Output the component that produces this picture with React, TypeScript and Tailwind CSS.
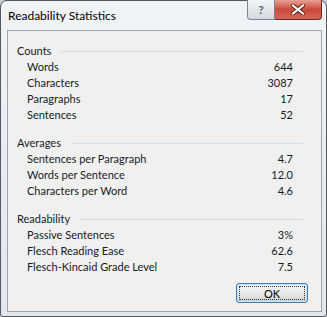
import React from 'react';

type Row = { label: string; value: string };

const sections: { title: string; rows: Row[] }[] = [
  {
    title: 'Counts',
    rows: [
      { label: 'Words', value: '644' },
      { label: 'Characters', value: '3087' },
      { label: 'Paragraphs', value: '17' },
      { label: 'Sentences', value: '52' },
    ],
  },
  {
    title: 'Averages',
    rows: [
      { label: 'Sentences per Paragraph', value: '4.7' },
      { label: 'Words per Sentence', value: '12.0' },
      { label: 'Characters per Word', value: '4.6' },
    ],
  },
  {
    title: 'Readability',
    rows: [
      { label: 'Passive Sentences', value: '3%' },
      { label: 'Flesch Reading Ease', value: '62.6' },
      { label: 'Flesch-Kincaid Grade Level', value: '7.5' },
    ],
  },
];

const Section: React.FC<{ title: string; rows: Row[] }> = ({ title, rows }) => (
  <div className="flex flex-col">
    {/* group header with etched line */}
    <div className="flex items-center h-4 pr-[18px]">
      <span>{title}</span>
      <div className="flex-1 ml-[10px] h-px bg-[#d5dfe5]" />
    </div>
    {rows.map((r) => (
      <div key={r.label} className="flex items-center justify-between h-4 pl-[10px] pr-[28px]">
        <span>{r.label}</span>
        <span>{r.value}</span>
      </div>
    ))}
  </div>
);

const App: React.FC = () => {
  return (
    <div
      className="w-[327px] h-[317px] overflow-hidden bg-[#c3ccd4]"
      style={{ fontFamily: 'Lato, "Liberation Sans", sans-serif' }}
    >
      <div className="w-full h-full flex flex-col rounded-t-[7px] rounded-b-[3px] border border-[#55595e] bg-gradient-to-b from-[#f1f4f7] via-[#e8ecf0] to-[#e2e7ec] pl-[6px] pr-[4px] pb-[4px]">
        {/* Title bar */}
        <div className="h-[29px] flex items-start shrink-0">
          <div className="pt-[6px] pl-[1px] text-[12px] text-black">Readability Statistics</div>
          <div className="ml-auto flex mt-[-1px]">
            <div className="w-[28px] h-[20px] flex items-center justify-center rounded-bl-[4px] border border-[#7d858f] border-t-0 bg-gradient-to-b from-[#f3f5f7] to-[#d3d9df] text-[12px] font-bold text-[#5a6470]">
              ?
            </div>
            <div className="w-[47px] h-[20px] flex items-center justify-center rounded-br-[4px] border border-l-0 border-t-0 border-[#6e2a25] bg-gradient-to-b from-[#e8a093] via-[#c9493a] to-[#d2665a]">
              <svg width="14" height="11" viewBox="0 0 14 11">
                <path d="M2 1.5 L12 9.5 M12 1.5 L2 9.5" stroke="#4a1a15" strokeWidth="4" strokeLinecap="square" />
                <path d="M2 1.5 L12 9.5 M12 1.5 L2 9.5" stroke="#ffffff" strokeWidth="2.2" strokeLinecap="square" />
              </svg>
            </div>
          </div>
        </div>

        {/* Client area */}
        <div className="flex-1 flex flex-col border border-[#9ea4ab] bg-[#f0f0f0] pl-[9px] pt-[12px] text-[11px] leading-4 text-[#151c26]">
          <div className="flex flex-col gap-[12px]">
            {sections.map((s) => (
              <Section key={s.title} title={s.title} rows={s.rows} />
            ))}
          </div>
          <div className="flex justify-end pr-[13px] mt-[8px]">
            <button className="w-[72px] h-[20px] rounded-[3px] border border-[#3c7fb1] bg-gradient-to-b from-[#f2f2f2] via-[#ebebeb] to-[#cfcfcf] p-[2px] shadow-[inset_0_0_0_1px_#c4e5f6]">
              <div className="w-full h-full flex items-center justify-center border border-dotted border-[#333] text-[11px] text-black leading-none">
                OK
              </div>
            </button>
          </div>
        </div>
      </div>
    </div>
  );
};

export default App;
